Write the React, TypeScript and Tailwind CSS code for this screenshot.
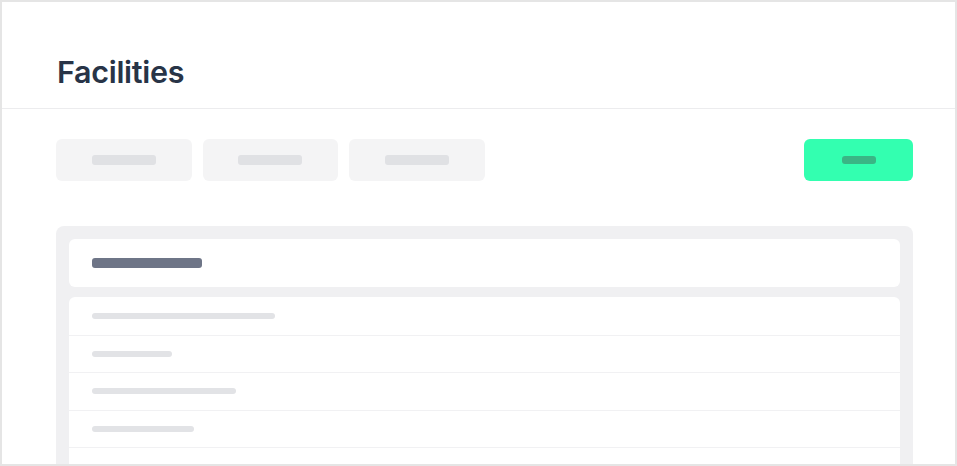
const filters = [1, 2, 3]
const rows = [183, 80, 144, 102, 0]

export default function App() {
  return (
    <div className="h-[466px] w-[957px] overflow-hidden border-2 border-[#e5e5e5] bg-white font-['Inter',sans-serif]">
      <header className="h-[107px] border-b border-[#ececee] pl-[55px] pt-[51px]">
        <h1 className="text-[30.5px] leading-[38px] font-semibold tracking-[-0.3px] text-[#283447]">
          Facilities
        </h1>
      </header>

      <main className="pl-[54px] pr-[42px] pt-[30px]">
        <div className="flex items-center justify-between">
          <div className="flex gap-[11px]">
            {filters.map((f) => (
              <div
                key={f}
                className="flex h-[42px] w-[135.5px] items-center justify-center rounded-[6px] bg-[#f4f4f5]"
              >
                <div className="h-[10px] w-[64px] rounded-[3px] bg-[#e0e1e4]" />
              </div>
            ))}
          </div>
          <button className="flex h-[42px] w-[109px] items-center justify-center rounded-[6px] bg-[#33ffb0]">
            <span className="h-[8px] w-[34px] rounded-[3px] bg-[#3ab585]" />
          </button>
        </div>

        <section className="mt-[45px] rounded-[8px] bg-[#f0f0f2] px-[13px] pt-[13px]">
          <div className="flex h-[48px] items-center rounded-[6px] bg-white px-[23px]">
            <div className="h-[10px] w-[110px] rounded-[3px] bg-[#6e7587]" />
          </div>
          <div className="mt-[10px] rounded-t-[6px] bg-white pt-[1px]">
            {rows.map((w, i) => (
              <div
                key={i}
                className="flex h-[37.5px] items-center border-b border-[#f1f1f3] px-[23px]"
              >
                {w > 0 && (
                  <div className="h-[6px] rounded-full bg-[#e2e3e6]" style={{ width: w }} />
                )}
              </div>
            ))}
          </div>
        </section>
      </main>
    </div>
  )
}
